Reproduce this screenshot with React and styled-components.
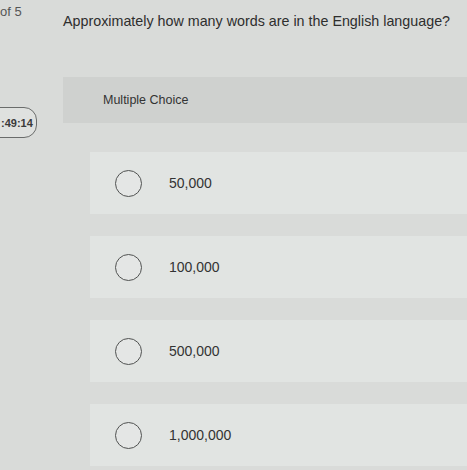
import styled, { createGlobalStyle } from "styled-components";

const GlobalStyle = createGlobalStyle`
  html, body {
    margin: 0;
    padding: 0;
    background: #d9dbd9;
    overflow: hidden;
  }
  body {
    font-family: "Liberation Sans", Arial, sans-serif;
    color: #333;
  }
`;

const Page = styled.div`
  display: grid;
  grid-template-columns: 63px 1fr;
  width: 467px;
  height: 470px;
  overflow: hidden;
`;

const Side = styled.div`
  display: flex;
  flex-direction: column;
  align-items: flex-start;
`;

const Counter = styled.div`
  margin-top: 6px;
  font-size: 13px;
  line-height: 10px;
  color: #555;
  padding-top: 1px;
`;

const Timer = styled.div`
  margin-top: 90px;
  margin-left: -14px;
  width: 51px;
  height: 31px;
  box-sizing: border-box;
  border: 1.5px solid #6a6c6b;
  border-radius: 13px;
  display: flex;
  align-items: center;
  padding-left: 14px;
  font-size: 11px;
  font-weight: bold;
  color: #3a3a3a;
  background: #dfe1df;
`;

const Main = styled.div`
  display: flex;
  flex-direction: column;
`;

const Question = styled.h1`
  margin: 11px 0 0;
  font-size: 14.3px;
  font-weight: normal;
  line-height: 20px;
  color: #2e2e2e;
  white-space: nowrap;
`;

const Panel = styled.section`
  margin-top: 46px;
  display: flex;
  flex-direction: column;
`;

const PanelHeader = styled.div`
  height: 46px;
  background: #cfd1cf;
  display: flex;
  align-items: center;
  padding-left: 40px;
  font-size: 12.5px;
  color: #333;
`;

const Options = styled.ul`
  list-style: none;
  margin: 0;
  padding: 29px 0 0 27px;
  display: flex;
  flex-direction: column;
  gap: 22px;
`;

const Option = styled.li`
  height: 62px;
  background: #e1e4e2;
  display: flex;
  align-items: center;
  padding-left: 25px;
  gap: 27px;
  font-size: 14px;
  color: #333;
`;

const Radio = styled.span`
  width: 27px;
  height: 27px;
  box-sizing: border-box;
  border: 1.5px solid #505251;
  border-radius: 50%;
  background: #e4e6e5;
  flex-shrink: 0;
`;

const choices = ["50,000", "100,000", "500,000", "1,000,000"];

const App = () => {
  return (
    <>
      <GlobalStyle />
      <Page>
        <Side>
          <Counter>of 5</Counter>
          <Timer>:49:14</Timer>
        </Side>
        <Main>
          <Question>Approximately how many words are in the English language?</Question>
          <Panel>
            <PanelHeader>Multiple Choice</PanelHeader>
            <Options>
              {choices.map((choice) => (
                <Option key={choice}>
                  <Radio />
                  {choice}
                </Option>
              ))}
            </Options>
          </Panel>
        </Main>
      </Page>
    </>
  );
};

export default App;
